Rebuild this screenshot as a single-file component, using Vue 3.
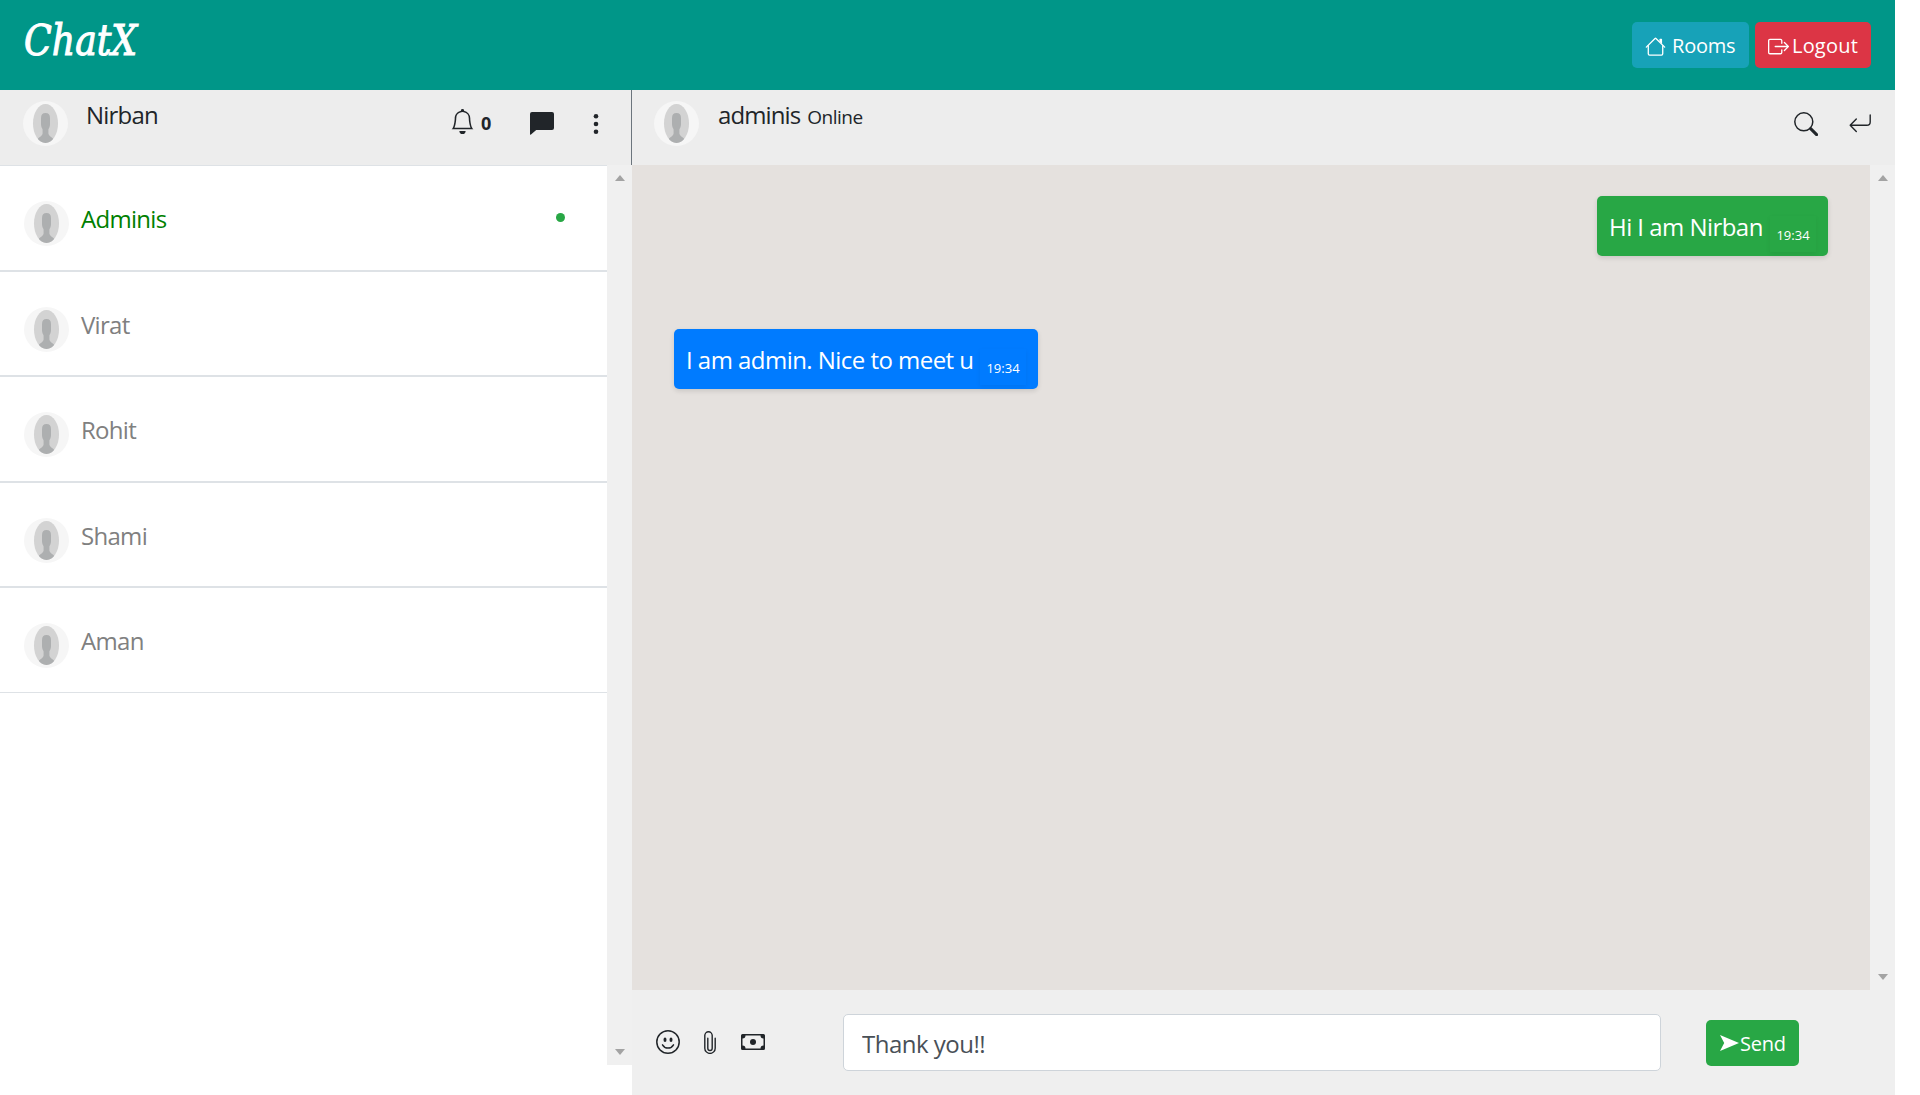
<template>
  <div class="chat-page">
    <header class="top-bar">
      <div class="brand">ChatX</div>
      <div class="top-actions">
        <button class="btn btn-info">
          <svg class="icon-house" viewBox="0 0 16 16" fill="currentColor">
            <path d="M2 13.5V7h1v6.5a.5.5 0 0 0 .5.5h9a.5.5 0 0 0 .5-.5V7h1v6.5a1.5 1.5 0 0 1-1.5 1.5h-9A1.5 1.5 0 0 1 2 13.5zm11-11V6l-2-2V2.5a.5.5 0 0 1 .5-.5h1a.5.5 0 0 1 .5.5z" />
            <path d="M7.293 1.5a1 1 0 0 1 1.414 0l6.647 6.646a.5.5 0 0 1-.708.708L8 2.207 1.354 8.854a.5.5 0 1 1-.708-.708L7.293 1.5z" />
          </svg>
          <span class="rooms-text">Rooms</span>
        </button>
        <button class="btn btn-danger">
          <svg class="icon-logout" viewBox="0 0 16 16" fill="currentColor">
            <path d="M10 12.5a.5.5 0 0 1-.5.5h-8a.5.5 0 0 1-.5-.5v-9a.5.5 0 0 1 .5-.5h8a.5.5 0 0 1 .5.5v2a.5.5 0 0 0 1 0v-2A1.5 1.5 0 0 0 9.5 2h-8A1.5 1.5 0 0 0 0 3.5v9A1.5 1.5 0 0 0 1.5 14h8a1.5 1.5 0 0 0 1.5-1.5v-2a.5.5 0 0 0-1 0v2z" />
            <path d="M15.854 8.354a.5.5 0 0 0 0-.708l-3-3a.5.5 0 0 0-.708.708L14.293 7.5H5.5a.5.5 0 0 0 0 1h8.793l-2.147 2.146a.5.5 0 0 0 .708.708l3-3z" />
          </svg>
          <span class="logout-text">Logout</span>
        </button>
      </div>
    </header>

    <div class="chat-body">
      <aside class="sidebar">
        <div class="side-header">
          <svg class="avatar" viewBox="0 0 45 45"><use href="#avatar-shape" /></svg>
          <span class="user-name">Nirban</span>
          <div class="side-tools">
            <svg class="icon-bell" viewBox="0 0 16 16" fill="currentColor">
              <path d="M8 16a2 2 0 0 0 2-2H6a2 2 0 0 0 2 2zM8 1.918l-.797.161A4.002 4.002 0 0 0 4 6c0 .628-.134 2.197-.459 3.742-.16.767-.376 1.566-.663 2.258h10.244c-.287-.692-.502-1.49-.663-2.258C12.134 8.197 12 6.628 12 6a4.002 4.002 0 0 0-3.203-3.92L8 1.917zM14.22 12c.223.447.481.801.78 1H1c.299-.199.557-.553.78-1C2.68 10.2 3 6.88 3 6c0-2.42 1.72-4.44 4.005-4.901a1 1 0 1 1 1.99 0A5.002 5.002 0 0 1 13 6c0 .88.32 4.2 1.22 6z" />
            </svg>
            <span class="notice-count">{{ notices }}</span>
            <svg class="icon-chat" viewBox="0 0 24 23" fill="currentColor">
              <path d="M2 0h20a2 2 0 0 1 2 2v14a2 2 0 0 1-2 2H6.2L1 22.6a.6.6 0 0 1-1-.5V2a2 2 0 0 1 2-2z" />
            </svg>
            <svg class="icon-dots" viewBox="0 0 6 22" fill="currentColor">
              <circle cx="3" cy="3.3" r="2.3" />
              <circle cx="3" cy="11" r="2.3" />
              <circle cx="3" cy="18.7" r="2.3" />
            </svg>
          </div>
        </div>
        <div class="side-content">
          <ul class="contact-list">
            <li
              v-for="contact in contacts"
              :key="contact.name"
              class="contact"
              :class="{ online: contact.online }"
            >
              <svg class="avatar" viewBox="0 0 45 45"><use href="#avatar-shape" /></svg>
              <span class="contact-name">{{ contact.name }}</span>
              <span v-if="contact.online" class="online-dot"></span>
            </li>
          </ul>
          <div class="scrollbar">
            <span class="arrow-up"></span>
            <span class="arrow-down"></span>
          </div>
        </div>
      </aside>

      <main class="conversation">
        <div class="conv-header">
          <svg class="avatar" viewBox="0 0 45 45"><use href="#avatar-shape" /></svg>
          <span class="peer-name">adminis</span>
          <span class="peer-status">Online</span>
          <div class="conv-tools">
            <svg class="icon-search" viewBox="0 0 24 24" fill="none" stroke="currentColor">
              <circle cx="9.8" cy="9.8" r="9" stroke-width="1.5" />
              <path d="M16.6 16.6l6 6" stroke-width="3" stroke-linecap="round" />
            </svg>
            <svg class="icon-return" viewBox="0 0 22 19" fill="none" stroke="currentColor" stroke-width="1.4" stroke-linecap="round" stroke-linejoin="round">
              <path d="M7.3 4.9L1.2 11.3l6.1 6.2M1.2 11.3h16.6a3.4 3.4 0 0 0 3.4-3.4V1" />
            </svg>
          </div>
        </div>

        <div class="messages-wrap">
          <div class="messages">
            <div
              v-for="(msg, i) in messages"
              :key="i"
              class="message"
              :class="msg.mine ? 'mine' : 'theirs'"
            >
              <span class="message-text">{{ msg.text }}</span>
              <span class="message-time">{{ msg.time }}</span>
            </div>
          </div>
          <div class="scrollbar">
            <span class="arrow-up"></span>
            <span class="arrow-down"></span>
          </div>
        </div>

        <div class="composer">
          <svg class="icon-smile" viewBox="0 0 24 24" fill="none" stroke="currentColor" stroke-width="1.5">
            <circle cx="12" cy="12" r="11.2" />
            <path d="M6.5 14.8a6.3 6.3 0 0 0 11 0" stroke-linecap="round" />
            <ellipse cx="9" cy="9.7" rx="1.5" ry="2.2" fill="currentColor" stroke="none" />
            <ellipse cx="15" cy="9.7" rx="1.5" ry="2.2" fill="currentColor" stroke="none" />
          </svg>
          <svg class="icon-clip" viewBox="0 0 12 23" fill="none" stroke="currentColor" stroke-width="1.4" stroke-linecap="round">
            <path d="M.8 4.5a3.7 3.7 0 0 1 7.4 0v12.8a2.2 2.2 0 0 1-4.4 0V7.2M.8 4.5v12.7a5.2 5.2 0 0 0 10.4 0V7.2" />
          </svg>
          <svg class="icon-cash" viewBox="0 0 24 16" fill="currentColor">
            <path fill-rule="evenodd" d="M1.5 0h21A1.5 1.5 0 0 1 24 1.5v13a1.5 1.5 0 0 1-1.5 1.5h-21A1.5 1.5 0 0 1 0 14.5v-13A1.5 1.5 0 0 1 1.5 0zM4.5 1.5a3 3 0 0 1-3 3v7a3 3 0 0 1 3 3h15a3 3 0 0 1 3-3v-7a3 3 0 0 1-3-3z" />
            <circle cx="12" cy="8" r="3" />
          </svg>
          <input v-model="draft" class="message-input" type="text" />
          <button class="btn btn-success">
            <svg class="icon-send" viewBox="0 0 19 16" fill="currentColor">
              <path d="M0 0l19 8L0 16l4.2-8z" />
            </svg>
            <span class="send-text">Send</span>
          </button>
        </div>
      </main>
    </div>

    <svg class="defs">
      <defs>
        <clipPath id="avatar-clip"><ellipse cx="22.5" cy="22.5" rx="12.5" ry="19.5" /></clipPath>
        <g id="avatar-shape">
          <circle cx="22.5" cy="22.5" r="22.5" fill="#f6f6f6" />
          <ellipse cx="22.5" cy="22.5" rx="12.5" ry="19.5" fill="#d3d3d3" />
          <path clip-path="url(#avatar-clip)" fill="#adafb0" d="M18 17c0-3.5 1.5-5 4.5-5s4.5 1.5 4.5 5v6c0 2.5-.9 4-1.6 5.5v4c.5 3 3.6 3.5 5.6 6V43H14v-4.5c2-2.5 5.1-3 5.6-6v-4C18.9 27 18 25.5 18 23z" />
        </g>
      </defs>
    </svg>
  </div>
</template>

<script setup>
import { ref } from 'vue'

const notices = ref(0)
const draft = ref('Thank you!!')

const contacts = [
  { name: 'Adminis', online: true },
  { name: 'Virat', online: false },
  { name: 'Rohit', online: false },
  { name: 'Shami', online: false },
  { name: 'Aman', online: false }
]

const messages = ref([
  { text: 'Hi I am Nirban', time: '19:34', mine: true },
  { text: 'I am admin. Nice to meet u', time: '19:34', mine: false }
])
</script>

<style>
body {
  background: #fff;
  overflow: hidden;
}
</style>

<style scoped>
.chat-page {
  width: 1895px;
  height: 1095px;
  display: flex;
  flex-direction: column;
  font-family: "Open Sans", "Noto Sans", sans-serif;
  font-size: 24px;
  line-height: 36px;
  color: #212529;
}

.chat-page * {
  box-sizing: border-box;
}

svg {
  display: block;
  flex: none;
}

.defs {
  position: absolute;
  width: 0;
  height: 0;
}

.top-bar {
  height: 90px;
  flex: none;
  display: flex;
  justify-content: space-between;
  padding: 22px 24px 0;
  background: #009688;
}

.brand {
  height: 36px;
  padding-top: 1px;
  font-family: "DejaVu Serif Condensed", "DejaVu Serif", serif;
  font-style: italic;
  font-size: 42px;
  color: #fff;
  -webkit-text-stroke: 1px #fff;
  transform: scaleX(0.96);
  transform-origin: left;
}

.top-actions {
  display: flex;
  gap: 6px;
}

.btn {
  height: 46px;
  display: flex;
  align-items: center;
  border: 0;
  border-radius: 5px;
  padding: 0;
  font-family: inherit;
  font-size: 20px;
  line-height: 30px;
  color: #fff;
  white-space: nowrap;
}

.btn-info {
  width: 117px;
  padding-left: 13px;
  background: #17a2b8;
}

.btn-danger {
  width: 116px;
  padding-left: 13px;
  background: #dc3545;
}

.btn-success {
  width: 93px;
  margin: 30px 0 0 45px;
  padding-left: 14px;
  background: #28a745;
}

.rooms-text,
.logout-text,
.send-text {
  padding-top: 2px;
  letter-spacing: -0.2px;
}

.logout-text {
  letter-spacing: 0.2px;
}

.icon-house {
  width: 21px;
  height: 21px;
  margin: 2px 6px 0 0;
}

.icon-logout {
  width: 21px;
  height: 21px;
  margin: 3px 3px 0 0;
}

.icon-send {
  width: 19px;
  height: 16px;
  margin-right: 1px;
}

.chat-body {
  flex: 1;
  display: flex;
  min-height: 0;
}

.sidebar {
  width: 632px;
  flex: none;
}

.side-header,
.conv-header {
  height: 75px;
  display: flex;
  align-items: flex-start;
  background: #ededed;
}

.side-header {
  padding: 11px 0 0 23px;
  border-right: 1px solid #6c757d;
}

.avatar {
  width: 45px;
  height: 45px;
}

.user-name {
  margin: -4px 0 0 18px;
  letter-spacing: -0.8px;
}

.side-tools {
  display: flex;
  margin-left: auto;
  padding-right: 32px;
}

.icon-bell {
  width: 25px;
  height: 25px;
  margin-top: 8px;
}

.notice-count {
  width: 49px;
  margin: 4px 0 0 6px;
  font-size: 18px;
  font-weight: 700;
  line-height: 36px;
}

.icon-chat {
  width: 24px;
  height: 23px;
  margin-top: 11px;
}

.icon-dots {
  width: 6px;
  height: 22px;
  margin: 12px 0 0 39px;
}

.side-content {
  height: 900px;
  display: flex;
}

.contact-list {
  flex: 1;
  margin: 0;
  padding: 0;
  list-style: none;
  border-top: 1px solid #dee2e6;
}

.contact {
  height: 105.5px;
  display: flex;
  align-items: flex-start;
  padding: 35px 42px 0 24px;
  border-bottom: 2px solid #dee2e6;
  color: #808080;
}

.contact:last-child {
  height: 105px;
  border-bottom-width: 1px;
}

.contact-name {
  margin-left: 12px;
  letter-spacing: -0.7px;
}

.contact.online .contact-name {
  color: #008000;
}

.online-dot {
  width: 9px;
  height: 9px;
  margin: 12px 0 0 auto;
  border-radius: 50%;
  background: #28a745;
}

.scrollbar {
  width: 25px;
  flex: none;
  display: flex;
  flex-direction: column;
  justify-content: space-between;
  align-items: center;
  padding: 10px 0;
  background: #f0f0f0;
}

.arrow-up,
.arrow-down {
  border: 5.5px solid transparent;
  border-top-width: 0;
  border-bottom: 6px solid #a3a3a3;
}

.arrow-down {
  border-bottom-width: 0;
  border-top: 6px solid #a3a3a3;
}

.conversation {
  flex: 1;
  display: flex;
  flex-direction: column;
}

.conv-header {
  padding: 11px 24px 0 22px;
}

.peer-name {
  margin: -4px 0 0 19px;
  letter-spacing: -0.9px;
}

.peer-status {
  margin: -2px 0 0 7px;
  font-size: 19px;
  letter-spacing: -0.5px;
}

.conv-tools {
  display: flex;
  margin-left: auto;
}

.icon-search {
  width: 24px;
  height: 24px;
  margin-top: 11px;
}

.icon-return {
  width: 22px;
  height: 19px;
  margin: 13px 0 0 31px;
}

.messages-wrap {
  height: 825px;
  display: flex;
}

.messages {
  flex: 1;
  display: flex;
  flex-direction: column;
  align-items: flex-start;
  gap: 73px;
  padding: 31px 42px 0;
  background: #e5e1de;
}

.message {
  height: 60px;
  display: flex;
  border-radius: 5px;
  padding: 13px 12px 0;
  color: #fff;
  white-space: nowrap;
  box-shadow: 0 2px 5px rgba(0, 0, 0, 0.12);
}

.message-text {
  letter-spacing: -0.54px;
}

.mine {
  width: 231px;
  align-self: flex-end;
  background: #28a745;
}

.theirs {
  width: 364px;
  background: #007bff;
}

.message-time {
  width: 46px;
  height: 36px;
  margin: 7px 0 0 auto;
  padding-top: 1px;
  font-size: 13px;
  font-weight: 500;
  text-align: center;
  box-shadow: 0 2px 5px rgba(0, 0, 0, 0.06);
}

.composer {
  flex: 1;
  display: flex;
  align-items: flex-start;
  padding-left: 24px;
  background: #efefef;
}

.icon-smile {
  width: 24px;
  height: 24px;
  margin-top: 40px;
}

.icon-clip {
  width: 12px;
  height: 23px;
  margin: 41px 0 0 24px;
}

.icon-cash {
  width: 24px;
  height: 16px;
  margin: 44px 0 0 25px;
}

.message-input {
  width: 818px;
  height: 57px;
  margin: 24px 0 0 78px;
  padding: 2px 18px 0;
  border: 1px solid #ced4da;
  border-radius: 5px;
  background: #fff;
  font-family: inherit;
  font-size: 24px;
  letter-spacing: -0.5px;
  color: #495057;
  outline: none;
}
</style>
